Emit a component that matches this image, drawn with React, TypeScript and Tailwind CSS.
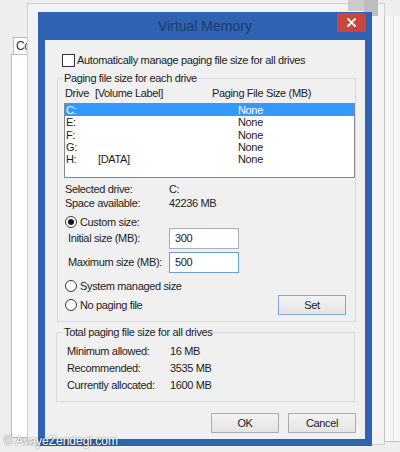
import React from "react";

const drives = [
  { drive: "C:", label: "", size: "None" },
  { drive: "E:", label: "", size: "None" },
  { drive: "F:", label: "", size: "None" },
  { drive: "G:", label: "", size: "None" },
  { drive: "H:", label: "[DATA]", size: "None" },
];

const totals = [
  { label: "Minimum allowed:", value: "16 MB" },
  { label: "Recommended:", value: "3535 MB" },
  { label: "Currently allocated:", value: "1600 MB" },
];

function Radio({ checked }: { checked?: boolean }) {
  return (
    <span className="w-[12px] h-[12px] rounded-full border border-[#3a3a3a] bg-white flex items-center justify-center shrink-0">
      {checked && <span className="w-[6px] h-[6px] rounded-full bg-[#151515]" />}
    </span>
  );
}

function Button({ children, focused }: { children: React.ReactNode; focused?: boolean }) {
  return (
    <div
      className={`w-[68px] h-[20px] border flex items-center justify-center bg-linear-to-b from-[#f3f3f3] to-[#e4e4e4] ${
        focused ? "border-[#7eaadb]" : "border-[#acacac]"
      }`}
    >
      {children}
    </div>
  );
}

export default function App() {
  return (
    <div className="relative w-[400px] h-[452px] overflow-hidden bg-[#eeeeee] font-['Liberation_Sans',Arial,sans-serif] text-[11px] tracking-[-0.35px] text-[#1c1c1c]">
      {/* System Properties window behind, left side */}
      <div className="absolute left-[13px] top-[37px] w-[18px] h-[18px] border border-b-0 border-[#b8b8b8] bg-[#fbfbfb] pl-[2px] text-[12px] leading-[17px] text-[#333]">
        Co
      </div>
      <div className="absolute left-[11px] top-[54px] w-[22px] h-[384px] border border-[#bdbdbd] bg-white" />

      {/* Performance Options window behind */}
      <div className="absolute left-[27px] top-[3px] w-[358px] h-[442px] border border-[#d2d2d2] bg-[#f3f3f3]" />
      <div className="absolute left-[348px] top-0 w-[30px] h-[11px] bg-[#cbcbcb]" />
      <div className="absolute left-[364px] top-0 w-[14px] h-[16px] bg-[#bdbdbd]" />

      {/* window at far right */}
      <div className="absolute left-[384px] top-[16px] w-[20px] h-[426px] border-l border-b border-[#c4c4c4] bg-[#f7f7f7]">
        <div className="ml-[8px] h-full border-l border-[#dedede]" />
      </div>

      {/* Virtual Memory dialog */}
      <div className="absolute left-[38px] top-[12px] w-[334px] h-[434px] bg-[#2f62b3] flex flex-col px-[7px] pb-[7px]">
        <div className="relative h-[28px] flex items-center justify-center">
          <span className="text-[14px] tracking-normal text-[#1f3c66]">Virtual Memory</span>
          <div className="absolute right-[-1px] top-[1px] w-[29px] h-[19px] bg-[#c8463c] flex items-center justify-center">
            <svg width="9" height="9" viewBox="0 0 9 9">
              <path d="M1 1L8 8M8 1L1 8" stroke="#ffffff" strokeWidth="1.8" strokeLinecap="round" />
            </svg>
          </div>
        </div>

        <div className="flex-1 bg-[#f0f0f0] flex flex-col">
          <div className="flex items-center gap-[2px] mt-[14px] ml-[17px] h-[13px]">
            <span className="w-[13px] h-[13px] border border-[#333333] bg-white shrink-0" />
            <span className="leading-[13px]">Automatically manage paging file size for all drives</span>
          </div>

          <fieldset className="ml-[12px] w-[299px] mt-[5px] border border-[#d9d9d9] pl-[7px] pb-[6px]">
            <legend className="ml-[-2px] px-[1px] leading-[13px]">Paging file size for each drive</legend>

            <div className="flex mt-[2px] h-[13px] leading-[13px]">
              <span className="w-[30px]">Drive</span>
              <span className="w-[117px]">[Volume Label]</span>
              <span>Paging File Size (MB)</span>
            </div>

            <div className="ml-[-1px] w-[291px] h-[75px] mt-[3px] border border-[#828790] bg-white">
              {drives.map((d, i) => (
                <div
                  key={d.drive}
                  className={`flex h-[12.3px] pt-[1px] leading-[11.3px] ${i === 0 ? "bg-[#3399ff] text-white" : ""}`}
                >
                  <span className="w-[33px] pl-[1px]">{d.drive}</span>
                  <span className="w-[140px]">{d.label}</span>
                  <span>{d.size}</span>
                </div>
              ))}
            </div>

            <div className="mt-[4px] leading-[14px]">
              <div className="flex">
                <span className="w-[104px]">Selected drive:</span>
                <span>C:</span>
              </div>
              <div className="flex">
                <span className="w-[104px]">Space available:</span>
                <span>42236 MB</span>
              </div>
            </div>

            <div className="mt-[6px] h-[12px] flex items-center gap-[3px]">
              <Radio checked />
              <span>Custom size:</span>
            </div>

            <div className="flex items-center h-[21px] pl-[3px]">
              <span className="w-[101px]">Initial size (MB):</span>
              <div className="w-[70px] h-[21px] border border-[#abadb3] bg-white pl-[5px] leading-[19px]">300</div>
            </div>

            <div className="flex items-center h-[21px] pl-[3px] mt-[3px]">
              <span className="w-[101px]">Maximum size (MB):</span>
              <div className="w-[70px] h-[21px] border border-[#6d9fd6] bg-white pl-[5px] leading-[19px]">500</div>
            </div>

            <div className="mt-[7px] h-[12px] flex items-center gap-[3px]">
              <Radio />
              <span>System managed size</span>
            </div>

            <div className="mt-[3px] h-[20px] flex items-center justify-between">
              <div className="flex items-center gap-[3px]">
                <Radio />
                <span>No paging file</span>
              </div>
              <div className="mr-[9px]">
                <Button focused>Set</Button>
              </div>
            </div>
          </fieldset>

          <fieldset className="ml-[11px] w-[299px] mt-[4px] border border-[#d9d9d9] pl-[10px] pb-[7px]">
            <legend className="ml-[-4px] px-[1px] leading-[13px]">Total paging file size for all drives</legend>
            <div className="mt-[4px] leading-[17px]">
              {totals.map((t) => (
                <div key={t.label} className="flex">
                  <span className="w-[103px]">{t.label}</span>
                  <span>{t.value}</span>
                </div>
              ))}
            </div>
          </fieldset>

          <div className="mt-[11px] flex justify-end gap-[9px] pr-[9px]">
            <Button>OK</Button>
            <Button>Cancel</Button>
          </div>
        </div>
      </div>

      {/* watermark */}
      <div className="absolute left-[4px] top-[434px] text-[12px] tracking-normal leading-[14px] text-white [text-shadow:0_0_2px_rgba(0,0,0,0.7)]">
        © AvayeZendegi.com
      </div>
    </div>
  );
}
